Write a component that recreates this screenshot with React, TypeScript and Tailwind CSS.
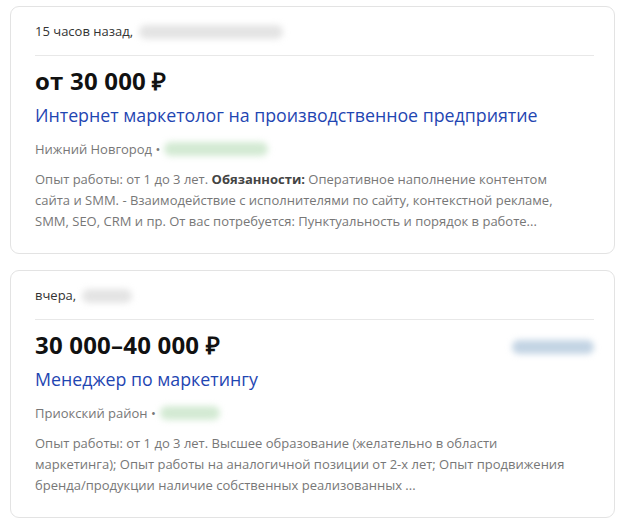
import React from 'react'

type Vacancy = {
  posted: string
  postedBlob: string
  salary: string
  title: string
  place: string
  placeBlob: string
  logoBlob?: boolean
  description: React.ReactNode
}

const vacancies: Vacancy[] = [
  {
    posted: '15 часов назад,',
    postedBlob: 'w-[144px]',
    salary: 'от 30 000 ₽',
    title: 'Интернет маркетолог на производственное предприятие',
    place: 'Нижний Новгород',
    placeBlob: 'w-[104px]',
    description: (
      <>
        Опыт работы: от 1 до 3 лет. <b className="font-bold text-[#444]">Обязанности:</b> Оперативное наполнение контентом
        сайта и SMM. - Взаимодействие с исполнителями по сайту, контекстной рекламе,
        SMM, SEO, CRM и пр. От вас потребуется: Пунктуальность и порядок в работе...
      </>
    ),
  },
  {
    posted: 'вчера,',
    postedBlob: 'w-[50px]',
    salary: '30 000–40 000 ₽',
    title: 'Менеджер по маркетингу',
    place: 'Приокский район',
    placeBlob: 'w-[60px]',
    logoBlob: true,
    description: (
      <>
        Опыт работы: от 1 до 3 лет. Высшее образование (желательно в области
        маркетинга); Опыт работы на аналогичной позиции от 2-х лет; Опыт продвижения
        бренда/продукции наличие собственных реализованных ...
      </>
    ),
  },
]

function Blob({ className }: { className: string }) {
  return <span className={`inline-block h-[14px] rounded-full blur-[3px] ${className}`} />
}

function VacancyCard({ v }: { v: Vacancy }) {
  return (
    <div className="rounded-[9px] border border-[#e3e3e3] bg-white pl-6 pr-5 pt-[14px] pb-[21px]">
      <div className="flex items-center gap-[6px] h-[22px] text-[13px] text-[#333]">
        <span>{v.posted}</span>
        <Blob className={`bg-[#e4e4e4] ${v.postedBlob}`} />
      </div>
      <div className="mt-[12px] border-t border-[#e8e8e8]" />
      <div className="mt-[10px] flex items-center justify-between">
        <div className="text-[24px] leading-[30px] font-bold tracking-[0.2px] text-[#111]">{v.salary}</div>
        {v.logoBlob && <Blob className="w-[82px] bg-[#c3d4e4] mt-[4px]" />}
      </div>
      <div className="mt-[6px] text-[17.8px] leading-[26px] text-[#1f46b2]">{v.title}</div>
      <div className="mt-[11px] flex items-center gap-[4px] text-[13px] leading-[20px] text-[#777]">
        <span>{v.place} •</span>
        <Blob className={`bg-[#d3ead3] ${v.placeBlob}`} />
      </div>
      <p className="mt-[10px] text-[13px] leading-[21px] text-[#777] max-w-[540px]">{v.description}</p>
    </div>
  )
}

export default function App() {
  return (
    <div className="min-h-screen bg-white px-[10px] pt-[6px] pr-[6px] font-['Open_Sans',sans-serif]">
      <div className="flex flex-col gap-[16px]">
        {vacancies.map((v, i) => (
          <VacancyCard key={i} v={v} />
        ))}
      </div>
    </div>
  )
}
